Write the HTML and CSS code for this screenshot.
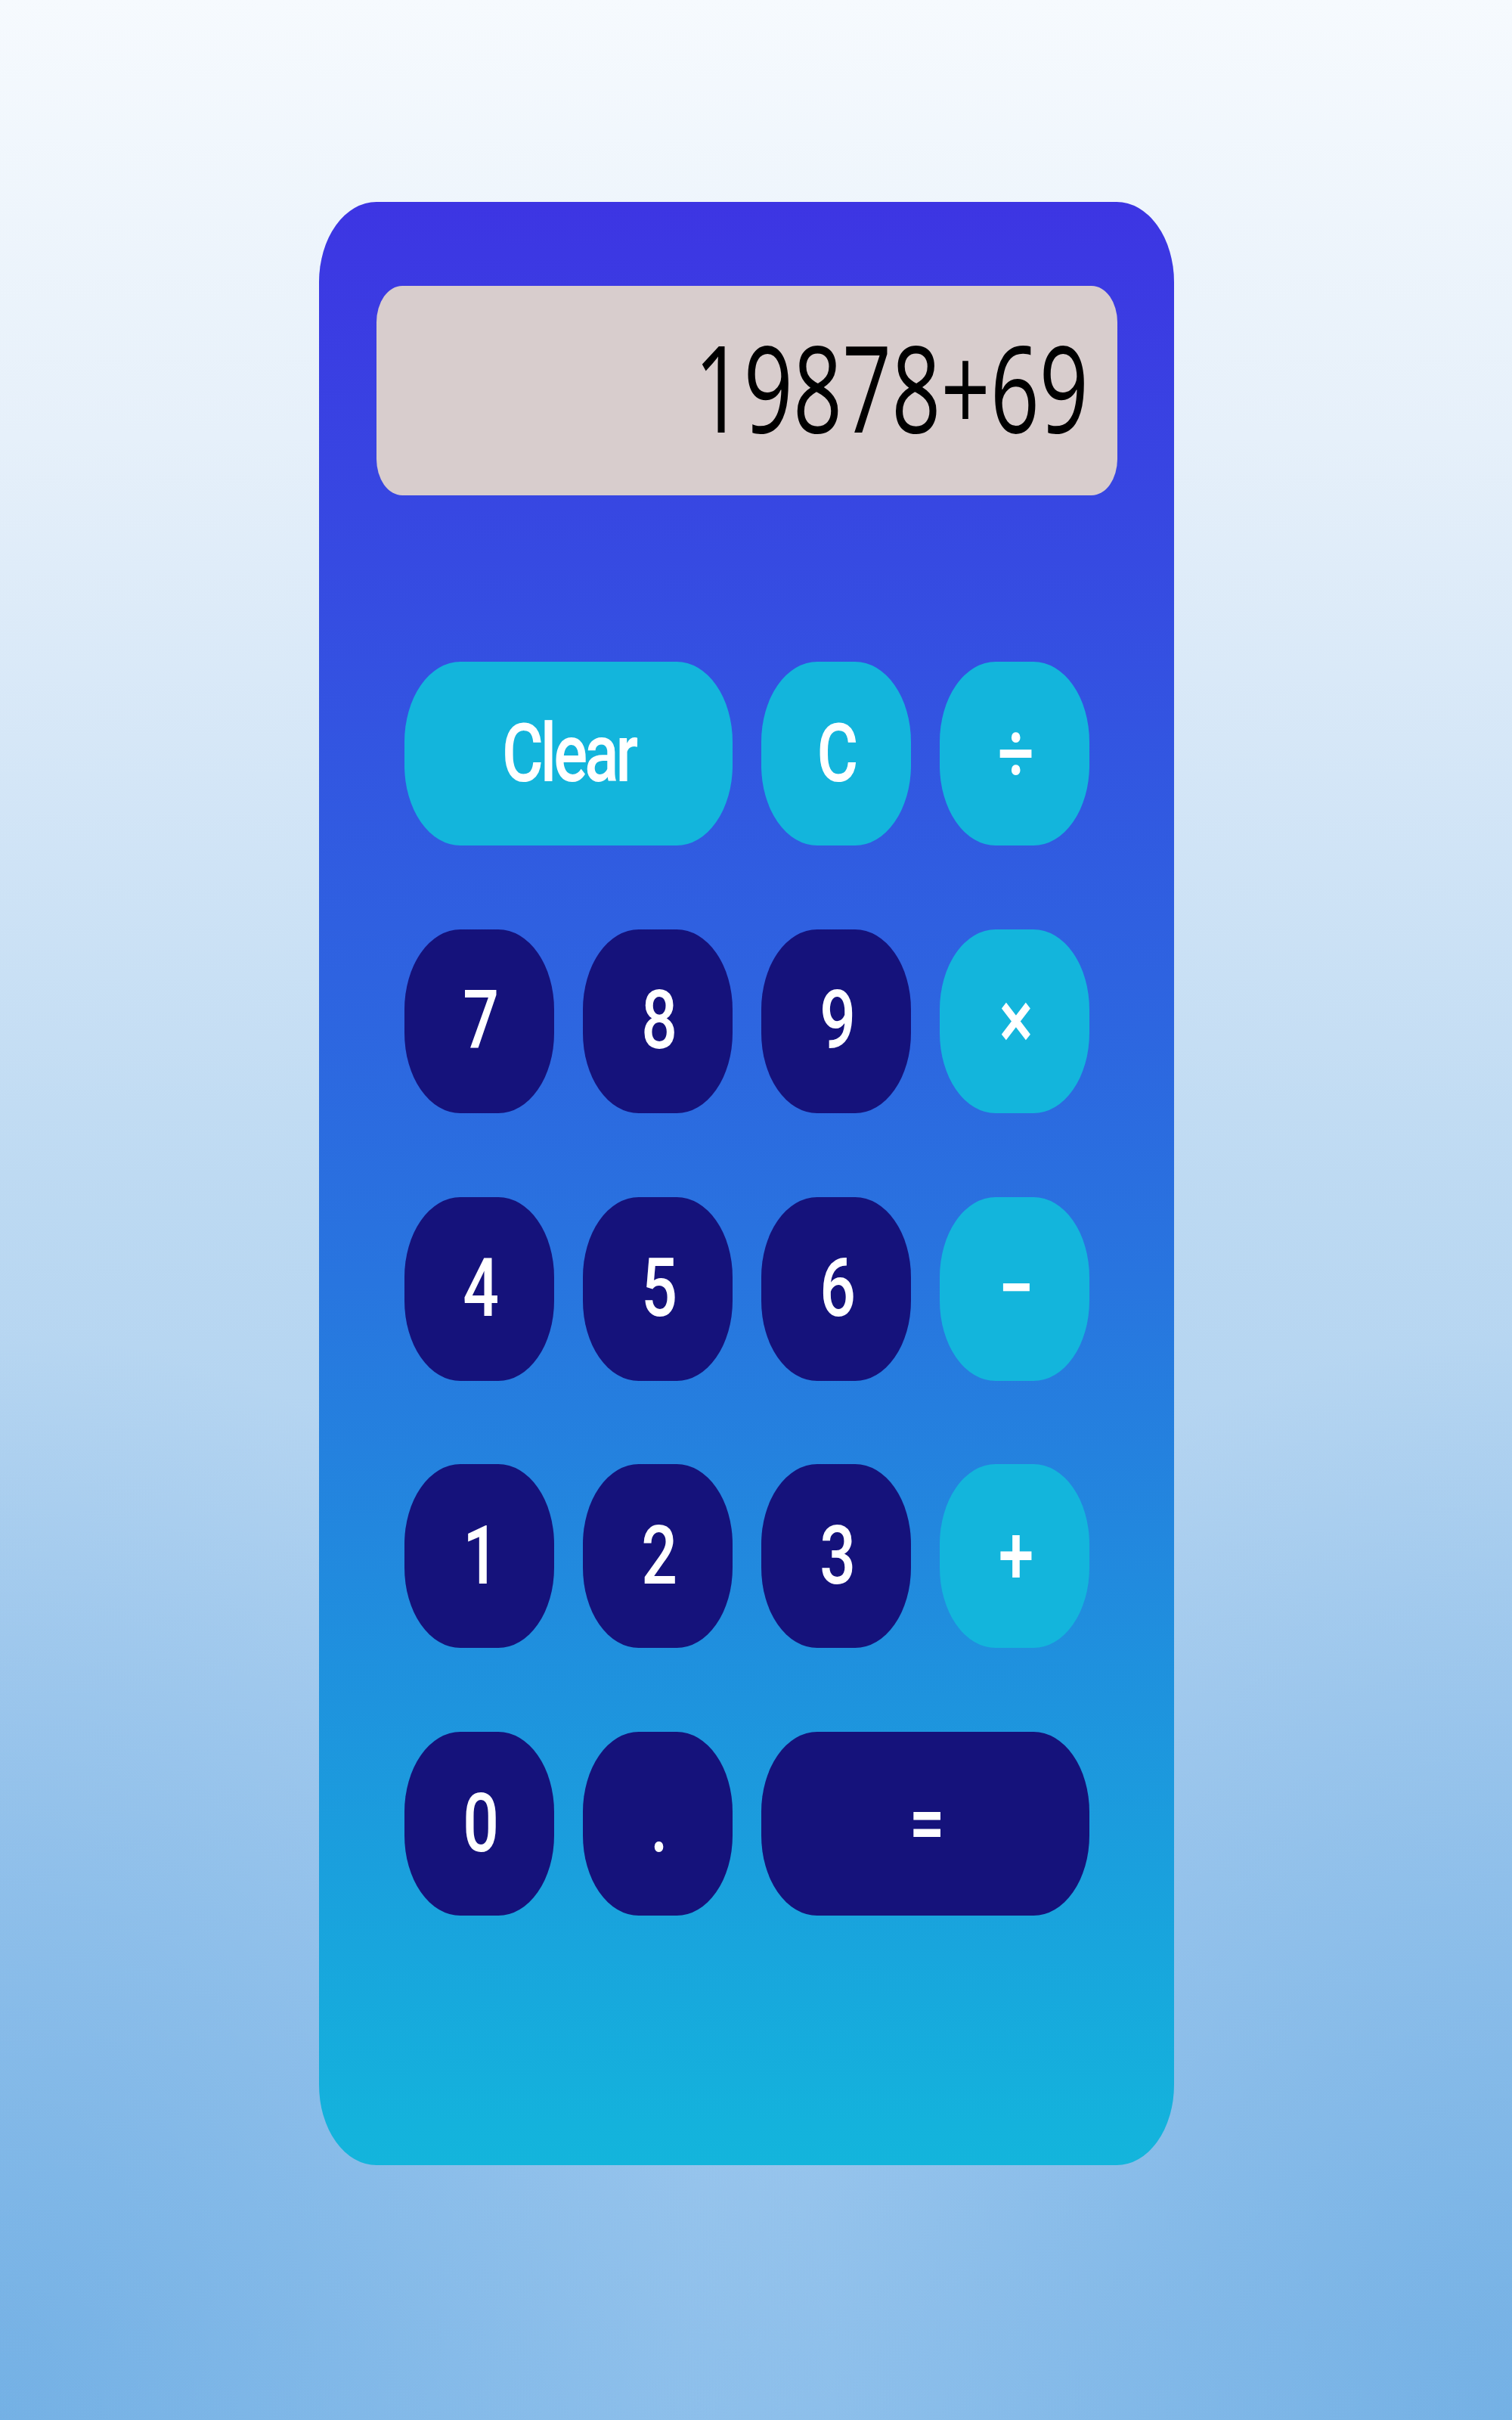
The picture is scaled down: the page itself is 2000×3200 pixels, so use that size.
FILE: index.html
```html
<!DOCTYPE html>
<html lang="en">
<head>
<meta charset="utf-8">
<title>Calculator</title>
<link rel="stylesheet" href="styles.css">
</head>
<body>
<main class="page">
  <section class="calc">
    <div class="display"><span class="display-text">19878+69</span></div>
    <div class="keys">
      <button class="key op wide"><span class="lbl">Clear</span></button>
      <button class="key op"><span class="lbl">C</span></button>
      <button class="key op"><span class="lbl">÷</span></button>
      <button class="key num"><span class="lbl">7</span></button>
      <button class="key num"><span class="lbl">8</span></button>
      <button class="key num"><span class="lbl">9</span></button>
      <button class="key op"><span class="lbl">×</span></button>
      <button class="key num"><span class="lbl">4</span></button>
      <button class="key num"><span class="lbl">5</span></button>
      <button class="key num"><span class="lbl">6</span></button>
      <button class="key op"><span class="lbl">−</span></button>
      <button class="key num"><span class="lbl">1</span></button>
      <button class="key num"><span class="lbl">2</span></button>
      <button class="key num"><span class="lbl">3</span></button>
      <button class="key op"><span class="lbl">+</span></button>
      <button class="key num"><span class="lbl">0</span></button>
      <button class="key num"><span class="lbl">.</span></button>
      <button class="key num wide"><span class="lbl">=</span></button>
    </div>
  </section>
</main>
</body>
</html>
```

FILE: styles.css
```css
html, body {
  margin: 0;
  padding: 0;
}

body {
  min-height: 3200px;
  font-family: Roboto, "Liberation Sans", sans-serif;
  background:
    radial-gradient(ellipse 55% 45% at 0% 100%, rgba(96, 165, 224, 0.6), rgba(96, 165, 224, 0) 100%),
    radial-gradient(ellipse 55% 45% at 100% 100%, rgba(96, 165, 224, 0.6), rgba(96, 165, 224, 0) 100%),
    linear-gradient(to bottom, #f6fafe 0%, #e6f0fa 18%, #d4e6f7 32%, #bcd9f2 50%, #a8cdef 72%, #92c2ec 100%);
}

.page {
  padding: 267px 0 0 422px;
}

.calc {
  box-sizing: border-box;
  width: 1131px;
  height: 2596px;
  padding: 111px 75px 0 76px;
  border-radius: 76px / 106px;
  background: linear-gradient(to bottom, #3d35e3 0%, #2875df 55%, #13b5dc 100%);
}

.display {
  box-sizing: border-box;
  height: 277px;
  padding: 0 38px 14px 20px;
  display: flex;
  align-items: center;
  justify-content: flex-end;
  background: #d8cdcd;
  border-radius: 34px / 48px;
}

.display-text {
  display: inline-block;
  font-family: "Open Sans", "Noto Sans", sans-serif;
  font-size: 114px;
  font-weight: 400;
  color: #000;
  line-height: 1;
  transform: scaleY(1.4);
  transform-origin: center;
}

.keys {
  margin-top: 220px;
  padding: 0 37px;
  display: grid;
  grid-template-columns: repeat(4, 1fr);
  grid-auto-rows: 243px;
  column-gap: 38px;
  row-gap: 110.75px;
}

.key {
  border: none;
  margin: 0;
  padding: 0;
  display: flex;
  align-items: center;
  justify-content: center;
  border-radius: 74px / 106px;
  color: #fff;
  font-family: Roboto, "Liberation Sans", sans-serif;
  font-size: 84px;
  font-weight: 500;
  cursor: pointer;
}

.key.wide {
  grid-column: span 2;
}

.op {
  background: #13b5dc;
}

.num {
  background: #15127b;
}

.lbl {
  display: inline-block;
  line-height: 1;
  letter-spacing: -4px;
  transform: scaleY(1.28);
}
```
